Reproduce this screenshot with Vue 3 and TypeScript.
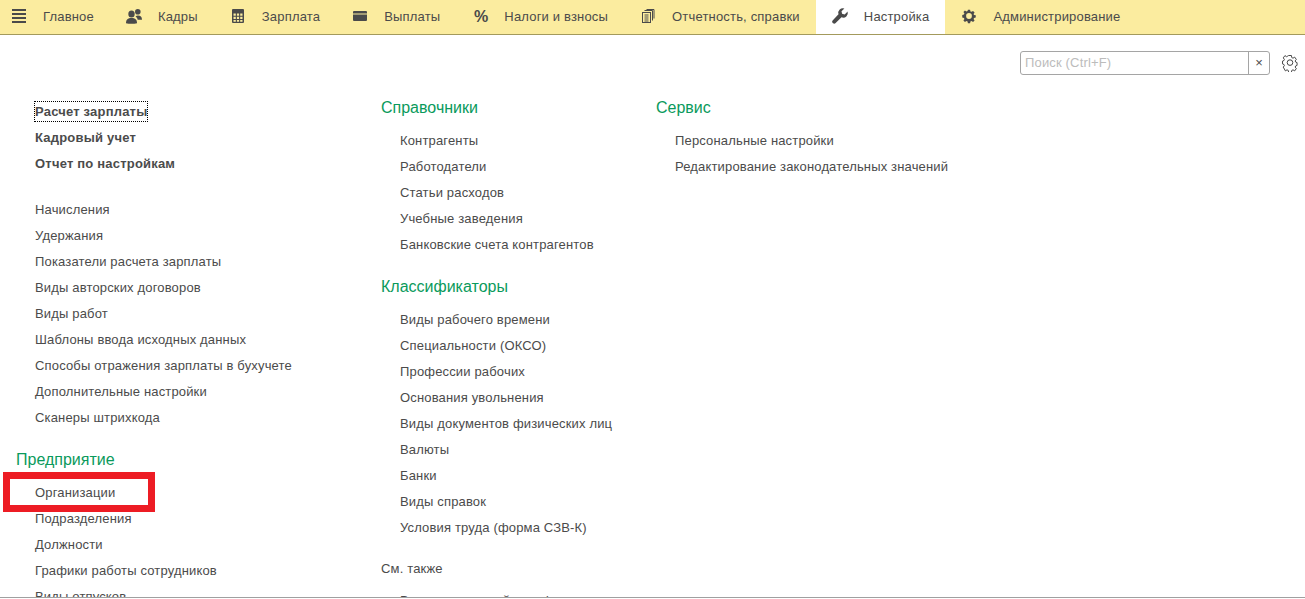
<script setup lang="ts">
interface Tab { label: string; icon: string; active?: boolean }
const tabs: Tab[] = [
  { label: 'Главное', icon: 'menu' },
  { label: 'Кадры', icon: 'people' },
  { label: 'Зарплата', icon: 'calc' },
  { label: 'Выплаты', icon: 'wallet' },
  { label: 'Налоги и взносы', icon: 'percent' },
  { label: 'Отчетность, справки', icon: 'docs' },
  { label: 'Настройка', icon: 'wrench', active: true },
  { label: 'Администрирование', icon: 'gear' },
]
const col1a = ['Начисления', 'Удержания', 'Показатели расчета зарплаты', 'Виды авторских договоров', 'Виды работ', 'Шаблоны ввода исходных данных', 'Способы отражения зарплаты в бухучете', 'Дополнительные настройки', 'Сканеры штрихкода']
const col1b = ['Организации', 'Подразделения', 'Должности', 'Графики работы сотрудников', 'Виды отпусков']
const col2a = ['Контрагенты', 'Работодатели', 'Статьи расходов', 'Учебные заведения', 'Банковские счета контрагентов']
const col2b = ['Виды рабочего времени', 'Специальности (ОКСО)', 'Профессии рабочих', 'Основания увольнения', 'Виды документов физических лиц', 'Валюты', 'Банки', 'Виды справок', 'Условия труда (форма СЗВ-К)']
const col3 = ['Персональные настройки', 'Редактирование законодательных значений']
</script>

<template>
  <div class="page">
    <nav class="tabs">
      <div v-for="t in tabs" :key="t.label" class="tab" :class="{ active: t.active }">
        <svg class="ico" width="16" height="16" viewBox="0 0 16 16" fill="#4a4a4a">
          <g v-if="t.icon === 'menu'"><rect x="1" y="1" width="14" height="2" /><rect x="1" y="5" width="14" height="2" /><rect x="1" y="9" width="14" height="2" /><rect x="1" y="13" width="14" height="2" /></g>
          <g v-else-if="t.icon === 'people'"><ellipse cx="5.500" cy="6" rx="3.200" ry="3.600" /><circle cx="11.800" cy="3.800" r="2.800" /><path d="M0 15.300c0-3.800 1.800-5.300 5.500-5.300s5.500 1.500 5.500 5.300c-3 .7-8 .7-11 0z" /><path d="M12 7.500c2.500 0 4 1.400 4 4.200h-4.300C11.300 10 10.500 9.200 9.500 8.600 10.200 7.900 11 7.500 12 7.500z" /></g>
          <g v-else-if="t.icon === 'calc'"><path fill-rule="evenodd" d="M2 2a1 1 0 0 1 1-1h10a1 1 0 0 1 1 1v12a1 1 0 0 1-1 1H3a1 1 0 0 1-1-1zM3.500 5.500v2.300h2.300V5.500zM6.900 5.500v2.300h2.200V5.500zM10.200 5.500v2.300h2.300V5.500zM3.500 8.800v2.200h2.300V8.800zM6.900 8.800v2.200h2.200V8.800zM10.200 8.800v2.200h2.300V8.800zM3.500 12v1.800h2.300V12zM6.900 12v1.800h2.200V12zM10.200 12v1.800h2.300V12z" /></g>
          <g v-else-if="t.icon === 'wallet'"><path d="M1 4a1 1 0 0 1 1-1h12a1 1 0 0 1 1 1v1.500H1zM1 6.500h14V12a1 1 0 0 1-1 1H2a1 1 0 0 1-1-1z" /></g>
          <g v-else-if="t.icon === 'percent'"><text x="9" y="14" text-anchor="middle" class="pct">%</text></g>
          <g v-else-if="t.icon === 'docs'" fill="none" stroke="#4a4a4a"><rect x="2.500" y="4.500" width="8" height="10" /><path d="M4.500 2.500h8v10M6.500 1.500h7.500v9M4.500 7h4M4.500 9h4M4.500 11h4M4.500 13h4" /></g>
          <g v-else-if="t.icon === 'wrench'"><path d="M15.600 3.600l-2.900 2.800-2.600-.6-.6-2.500L12.400.5A4.600 4.600 0 0 0 6.500 6.200L.6 12.600a1.600 1.600 0 0 0 .1 2.300l.4.400c.7.600 1.700.6 2.300 0l6.100-6a4.600 4.600 0 0 0 6.100-5.700z" /></g>
          <g v-else-if="t.icon === 'gear'"><path fill-rule="evenodd" transform="translate(0.800 0.800) scale(0.9)" d="M6.800 1h2.400l.4 1.900 1.200.5 1.700-1 1.700 1.600-1.100 1.700.5 1.200 1.900.4v2.400l-1.900.4-.5 1.200 1.100 1.700-1.700 1.600-1.700-1-1.200.5-.4 1.900H6.800l-.4-1.900-1.200-.5-1.700 1-1.700-1.600 1.100-1.700-.5-1.200-1.900-.4V6.800l1.900-.4.500-1.200-1.100-1.700 1.700-1.600 1.700 1 1.200-.5zM8 4.800a3.200 3.200 0 1 0 0 6.400 3.200 3.200 0 0 0 0-6.400z" /></g>
        </svg>
        <span class="tlabel">{{ t.label }}</span>
      </div>
    </nav>

    <div class="toolbar">
      <div class="search">
        <span class="ph">Поиск (Ctrl+F)</span>
        <span class="clear">×</span>
      </div>
      <svg class="cog" width="16" height="18" viewBox="0 0 16 18" fill="none" stroke="#444" stroke-width="1">
        <path d="M6.500 1.500h3l.3 2 1.400.7 1.700-1.100 1.800 2.300-1.200 1.500.4 1.100 1.600.6v2.800l-1.600.6-.4 1.100 1.200 1.500-1.800 2.300-1.700-1.100-1.400.7-.3 2h-3l-.3-2-1.400-.7-1.700 1.100L.8 13.100 2 11.600l-.4-1.100L0 9.900V7.100l1.600-.6.400-1.100L.8 3.900l1.800-2.300 1.700 1.100 1.400-.7z" transform="translate(0.500 0) scale(0.94 1)" />
        <circle cx="8" cy="8.600" r="2.800" />
      </svg>
    </div>

    <main class="columns">
      <section class="col c1">
        <a class="item bold focus">Расчет зарплаты</a>
        <a class="item bold">Кадровый учет</a>
        <a class="item bold">Отчет по настройкам</a>
        <div class="list l1a"><a v-for="x in col1a" :key="x" class="item">{{ x }}</a></div>
        <h2 class="head h-gap">Предприятие</h2>
        <div class="list">
          <span class="mark"></span>
          <a v-for="x in col1b" :key="x" class="item">{{ x }}</a>
        </div>
      </section>
      <section class="col c2">
        <h2 class="head">Справочники</h2>
        <div class="list"><a v-for="x in col2a" :key="x" class="item">{{ x }}</a></div>
        <h2 class="head h-gap">Классификаторы</h2>
        <div class="list"><a v-for="x in col2b" :key="x" class="item">{{ x }}</a></div>
        <div class="also">См. также</div>
        <div class="list tail"><a class="item">Вспомогательный тариф</a></div>
      </section>
      <section class="col c3">
        <h2 class="head">Сервис</h2>
        <div class="list"><a v-for="x in col3" :key="x" class="item">{{ x }}</a></div>
      </section>
    </main>
    <div class="bottom"></div>
  </div>
</template>

<style>
html, body { margin: 0; background: #fff; overflow: hidden; }
</style>

<style scoped>
.page { position: relative; width: 1305px; height: 599px; overflow: hidden; font-family: "Liberation Sans", Arial, sans-serif; font-size: 13px; letter-spacing: 0.16px; color: #4b4b4b; background: #fff; }
.tabs { display: flex; height: 34px; background: #fbec9f; border-bottom: 1px solid #a39a5c; }
.tab { display: flex; align-items: center; gap: 16px; height: 34px; box-sizing: border-box; padding: 0 16px 2px; }
.tab:first-child { padding-left: 11px; }
.tab.active { background: #fff; }
.ico { flex: none; overflow: visible; }
.pct { font-family: "Liberation Sans", sans-serif; font-weight: bold; font-size: 16px; letter-spacing: 0; }
.tlabel { white-space: nowrap; letter-spacing: 0.18px; }
.toolbar { display: flex; align-items: center; justify-content: flex-end; gap: 12px; height: 24px; margin-top: 16px; padding-right: 7px; }
.search { display: flex; justify-content: space-between; box-sizing: border-box; width: 250px; height: 24px; border: 1px solid #a5a5a5; border-radius: 3px; line-height: 22px; }
.ph { padding-left: 4px; color: #bcbcbc; }
.clear { width: 20px; text-align: center; border-left: 1px solid #a5a5a5; letter-spacing: 0; }
.columns { display: flex; padding-top: 26px; }
.col { display: flex; flex-direction: column; align-items: flex-start; }
.c1 { width: 381px; padding-left: 16px; box-sizing: border-box; }
.c2 { width: 275px; margin-top: -3px; }
.c3 { margin-top: -3px; }
.head { margin: 0; font-weight: normal; font-size: 16px; letter-spacing: 0; line-height: 20px; color: #0a9a5c; }
.list { position: relative; display: flex; flex-direction: column; align-items: flex-start; padding-left: 19px; padding-top: 10px; }
.item { display: block; height: 26px; line-height: 26px; white-space: nowrap; }
.c1 > .item { margin-left: 19px; }
.bold { font-weight: bold; letter-spacing: 0.2px; }
.focus { height: 21px; line-height: 19px; box-sizing: border-box; margin-bottom: 3px; margin-left: 18px !important; border: 1px dotted #000; }
.l1a { padding-top: 20px; }
.h-gap { margin-top: 19px; }
.mark { position: absolute; left: -13px; top: 2px; width: 138px; height: 26px; border: 7px solid #ed1c24; }
.also { height: 14px; margin-top: 21px; line-height: 14px; }
.tail { padding-top: 12px; }
.bottom { position: absolute; left: 0; right: 0; top: 597px; height: 2px; background: #fff; border-top: 1px solid #a0a0a0; box-sizing: border-box; }
</style>
